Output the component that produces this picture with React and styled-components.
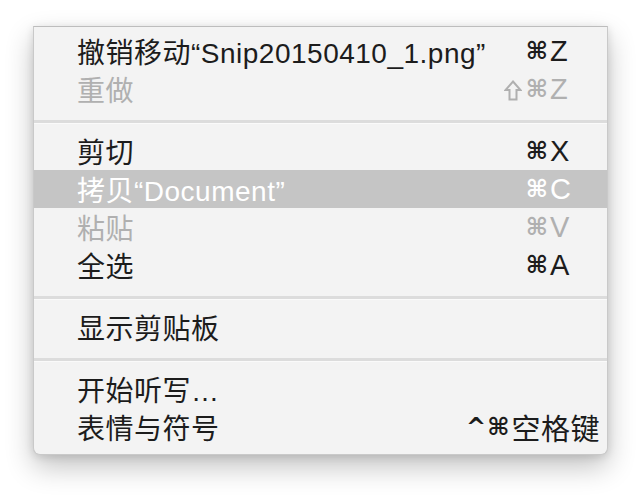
import React from "react";
import styled, { createGlobalStyle } from "styled-components";

const Global = createGlobalStyle`
  html, body { margin: 0; padding: 0; background: #ffffff; }
  body { font-family: "Liberation Sans", "Noto Sans CJK SC", sans-serif; }
`;

const Page = styled.div`
  width: 642px;
  height: 498px;
  padding: 26px 0 0 33px;
  box-sizing: border-box;
`;

const Menu = styled.div`
  width: 575px;
  height: 429px;
  box-sizing: border-box;
  background: #f3f3f3;
  border: 1px solid #c9c9c9;
  border-top-color: #bdbdbd;
  border-radius: 0 0 7px 7px;
  padding: 5px 0 8px;
  box-shadow: 0 12px 28px rgba(0, 0, 0, 0.24), 0 2px 8px rgba(0, 0, 0, 0.12);
  display: flex;
  flex-direction: column;
  font-family: "Liberation Sans", "Noto Sans CJK SC", sans-serif;
  font-size: 28px;
  letter-spacing: 0.5px;
`;

const Row = styled.div`
  height: 38px;
  display: flex;
  align-items: center;
  padding: 0 7px 0 43px;
  color: ${(p) => (p.$active ? "#ffffff" : p.$disabled ? "#b0b0b0" : "#1c1c1c")};
  background: ${(p) => (p.$active ? "#c5c5c5" : "transparent")};
  white-space: nowrap;
`;

const Label = styled.span`
  flex: 1;
`;

const Shortcut = styled.span`
  display: flex;
  align-items: center;
`;

const Mods = styled.span`
  display: flex;
  align-items: center;
  gap: 4px;
  font-family: "DejaVu Sans", "Liberation Sans", sans-serif;
  font-size: 24px;
  font-weight: bold;
  letter-spacing: 1px;
  margin-right: 1px;
`;

const Key = styled.span`
  min-width: 50px;
  text-align: left;
  font-size: 29px;
`;

const ShiftIcon = styled.svg`
  width: 18px;
  height: 21px;
  margin-top: 2px;
`;

const Separator = styled.div`
  height: 24px;
  display: flex;
  align-items: center;
  padding-top: 3px;
  box-sizing: border-box;
  &::after {
    content: "";
    flex: 1;
    height: 3px;
    background: #dcdcdc;
    border-bottom: 1px solid #fafafa;
  }
`;

const Shift = () => (
  <ShiftIcon viewBox="0 0 18 21" fill="none" stroke="currentColor" strokeWidth="2" strokeLinejoin="miter">
    <path d="M9 1.5 L16.5 10 L12.5 10 L12.5 19.5 L5.5 19.5 L5.5 10 L1.5 10 Z" />
  </ShiftIcon>
);

const items = [
  { label: "撤销移动“Snip20150410_1.png”", mods: "⌘", key: "Z" },
  { label: "重做", mods: "⌘", shift: true, key: "Z", disabled: true },
  "sep",
  { label: "剪切", mods: "⌘", key: "X" },
  { label: "拷贝“Document”", mods: "⌘", key: "C", active: true },
  { label: "粘贴", mods: "⌘", key: "V", disabled: true },
  { label: "全选", mods: "⌘", key: "A" },
  "sep",
  { label: "显示剪贴板" },
  "sep",
  { label: "开始听写…" },
  { label: "表情与符号", mods: "^⌘", key: "空格键" },
];

export default function App() {
  return (
    <>
      <Global />
      <Page>
        <Menu>
          {items.map((it, i) =>
            it === "sep" ? (
              <Separator key={i} />
            ) : (
              <Row key={i} $active={it.active} $disabled={it.disabled}>
                <Label>{it.label}</Label>
                {it.key && (
                  <Shortcut>
                    <Mods>
                      {it.shift && <Shift />}
                      <span>{it.mods}</span>
                    </Mods>
                    <Key>{it.key}</Key>
                  </Shortcut>
                )}
              </Row>
            )
          )}
        </Menu>
      </Page>
    </>
  );
}
